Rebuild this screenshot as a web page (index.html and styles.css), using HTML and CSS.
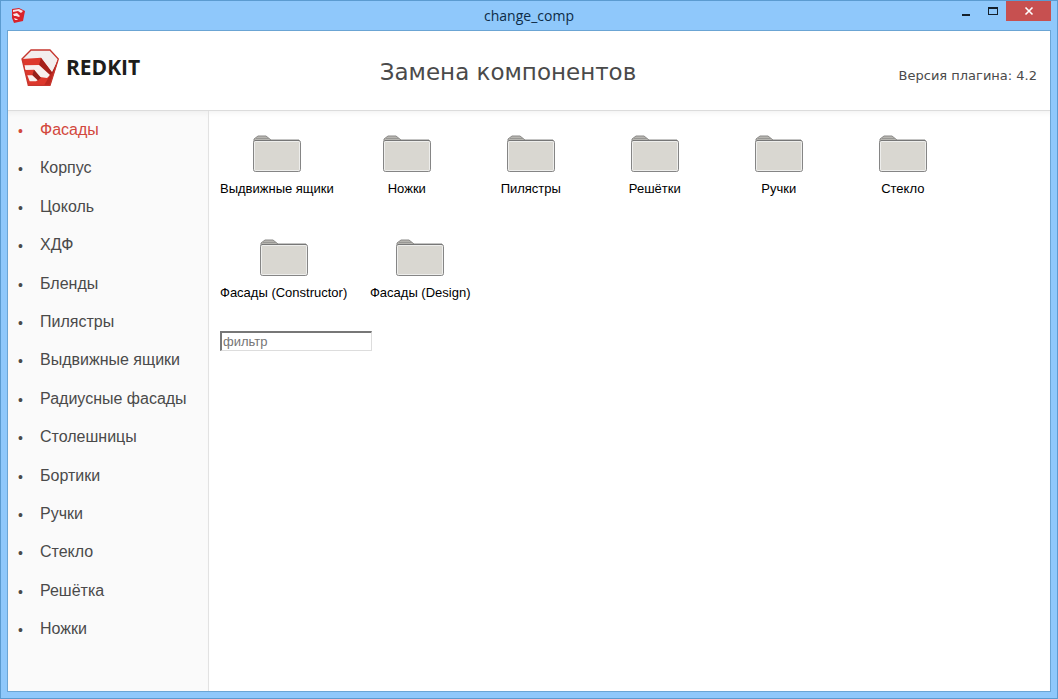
FILE: index.html
```html
<!DOCTYPE html>
<html lang="ru">
<head>
<meta charset="utf-8">
<title>change_comp</title>
<link rel="stylesheet" href="styles.css">
</head>
<body>
<svg class="defs" aria-hidden="true">
  <symbol id="logo" viewBox="10 9 114 114">
    <path d="M40 12H97L122 39L97 118H32L13 39Z" fill="#f3eeee"/>
    <path d="M13 39L70 35L104 80L122 39L97 118H32Z" fill="#dd382c"/>
    <path d="M70 35L103 79L122 40L114 68L101 91L64 57Z" fill="#a5201a"/>
    <path d="M20 58L64 57L97 87L88 96L66 93L49 71L23 72Z" fill="#f8f0ee"/>
    <path d="M49 71L70 95L60 104L44 88Z" fill="#96201a"/>
    <path d="M29 88H44L60 103L55 106H36Z" fill="#f8f0ee"/>
    <path d="M97 87L113 70L98 116L80 117Z" fill="#bd2920"/>
    <path d="M40 12H97L122 39L97 118H32L13 39Z" fill="none" stroke="#c6372f" stroke-width="4"/>
  </symbol>
  <symbol id="appicon" viewBox="0 0 14 15">
    <path d="M1 1L8 0L14 3L12 13L3 15L1 10Z" fill="#d9232a"/>
    <path d="M2 2L8 1L12 3L10 5L7 3L2 4ZM2 6L6 5L9 8L8 9L5 8L3 8ZM3 10L6 11L7 12L4 12Z" fill="#f8e4e8"/>
  </symbol>
  <symbol id="folder" viewBox="0 0 48 37">
    <path d="M1 10V4L5 1H13L18 5H46L47 10Z" fill="#b6b5b0" stroke="#8b8a88"/>
    <path d="M3 3.500H16" stroke="#989794"/>
    <rect x=".5" y="5.500" width="47" height="31" rx="2" fill="#d9d7d1" stroke="#858585"/>
    <rect x="1.500" y="6.500" width="45" height="29" rx="1" fill="none" stroke="#eeeeec"/>
    <path d="M2 5.500H46" stroke="#777"/>
  </symbol>
</svg>
<div class="window">
  <header class="titlebar">
    <svg class="app-icon"><use href="#appicon"/></svg>
    <span class="window-title">change_comp</span>
    <div class="window-buttons">
      <button class="win-button minimize" aria-label="Свернуть"><svg viewBox="0 0 10 10"><path d="M1 8H9V10H1Z" fill="#14202b"/></svg></button>
      <button class="win-button maximize" aria-label="Развернуть"><svg viewBox="0 0 10 10"><path d="M0 1H10V9H0ZM1 3V8H9V3Z" fill="#14202b" fill-rule="evenodd"/></svg></button>
      <button class="win-button close" aria-label="Закрыть"><svg viewBox="0 0 10 10"><path d="M1.500 1.500L8.500 8.500M8.500 1.500L1.500 8.500" stroke="#fff" stroke-width="1.600"/></svg></button>
    </div>
  </header>
  <div class="client">
    <div class="header">
      <div class="brand"><svg class="logo"><use href="#logo"/></svg><span>REDKIT</span></div>
      <h1>Замена компонентов</h1>
      <span class="version">Версия плагина: 4.2</span>
    </div>
    <div class="body">
      <nav class="sidebar">
        <ul>
          <li class="active"><a href="#">Фасады</a></li>
          <li><a href="#">Корпус</a></li>
          <li><a href="#">Цоколь</a></li>
          <li><a href="#">ХДФ</a></li>
          <li><a href="#">Бленды</a></li>
          <li><a href="#">Пилястры</a></li>
          <li><a href="#">Выдвижные ящики</a></li>
          <li><a href="#">Радиусные фасады</a></li>
          <li><a href="#">Столешницы</a></li>
          <li><a href="#">Бортики</a></li>
          <li><a href="#">Ручки</a></li>
          <li><a href="#">Стекло</a></li>
          <li><a href="#">Решётка</a></li>
          <li><a href="#">Ножки</a></li>
        </ul>
      </nav>
      <main class="content">
        <div class="folders">
          <a class="folder" href="#"><svg><use href="#folder"/></svg><span>Выдвижные ящики</span></a>
          <a class="folder" href="#"><svg><use href="#folder"/></svg><span>Ножки</span></a>
          <a class="folder" href="#"><svg><use href="#folder"/></svg><span>Пилястры</span></a>
          <a class="folder" href="#"><svg><use href="#folder"/></svg><span>Решётки</span></a>
          <a class="folder" href="#"><svg><use href="#folder"/></svg><span>Ручки</span></a>
          <a class="folder" href="#"><svg><use href="#folder"/></svg><span>Стекло</span></a>
          <a class="folder" href="#"><svg><use href="#folder"/></svg><span>Фасады (Constructor)</span></a>
          <a class="folder" href="#"><svg><use href="#folder"/></svg><span>Фасады (Design)</span></a>
        </div>
        <input class="filter" type="text" placeholder="фильтр" aria-label="фильтр">
      </main>
    </div>
  </div>
</div>
</body>
</html>
```

FILE: styles.css
```css
* { box-sizing: border-box; }
body {
  margin: 0;
  font-family: "Liberation Sans", Arial, sans-serif;
  color: #000;
}
a { color: inherit; text-decoration: none; }
.defs { position: absolute; width: 0; height: 0; }

.window {
  display: flex;
  flex-direction: column;
  min-height: 100vh;
  padding: 0 6px 6px;
  background: #8fc8fb;
  border: 1px solid #5b9bd0;
}
.titlebar {
  display: grid;
  grid-template-columns: 1fr auto 1fr;
  align-items: center;
  height: 29px;
}
.app-icon { width: 14px; height: 15px; margin-left: 4px; }
.window-title {
  font: 14px/20px "Open Sans", "Noto Sans", sans-serif;
  color: #0d2c47;
}
.window-buttons {
  display: flex;
  justify-content: flex-end;
  align-self: start;
}
.win-button {
  display: flex;
  align-items: center;
  justify-content: center;
  width: 27px;
  height: 20px;
  padding: 0;
  border: 0;
  background: none;
}
.win-button svg { width: 10px; height: 10px; }
.close { width: 45px; background: #c75050; }

.client {
  flex: 1;
  display: flex;
  flex-direction: column;
  background: #fff;
  border: 1px solid #6ba5d4;
}
.header {
  display: grid;
  grid-template-columns: 1fr auto 1fr;
  align-items: center;
  height: 80px;
  padding: 0 13px;
  border-bottom: 1px solid #dcdcdc;
  font-family: "DejaVu Sans", Verdana, sans-serif;
  color: #4a4a4a;
}
.brand {
  display: flex;
  align-items: center;
  gap: 7px;
  padding-bottom: 5px;
  font: bold 21px/30px "Open Sans", "Noto Sans", sans-serif;
  color: #1d1d1b;
}
.brand span { padding-bottom: 3px; }
.logo { width: 38px; height: 38px; }
h1 {
  margin: 0;
  padding: 2px 42px 0 0;
  font-size: 23px;
  line-height: 30px;
  font-weight: normal;
}
.version {
  justify-self: end;
  padding-top: 10px;
  font-size: 13px;
  line-height: 20px;
}

.body { flex: 1; display: flex; }
.sidebar {
  flex: none;
  width: 201px;
  background: #fafafa;
  border-right: 1px solid #e2e2e2;
  box-shadow: inset 0 5px 5px -3px #eee;
}
.sidebar ul {
  margin: 0;
  padding: 0 0 0 10px;
  list-style: none;
  font-size: 16px;
  line-height: 2.4;
  color: #4a4a4a;
}
.sidebar li { display: flex; }
.sidebar li::before { content: "•"; width: 22px; font-size: 14px; line-height: 40px; height: 38px; }
.sidebar .active { color: #d2483d; }

.content {
  flex: 1;
  padding: 24px 10px;
  box-shadow: inset 0 5px 5px -3px #f3f3f3;
}
.folders { display: flex; flex-wrap: wrap; gap: 40px 20px; max-width: 800px; }
.folder {
  display: flex;
  flex-direction: column;
  align-items: center;
  gap: 6px;
  min-width: 104px;
  padding: 0 1px;
  font-size: 13px;
  line-height: 21px;
}
.folder svg { width: 48px; height: 37px; }
.filter {
  display: block;
  width: 152px;
  height: 20px;
  margin: 28px 0 0 1px;
  padding: 0 1px;
  border: 1px solid #ddd;
  border-top: 2px solid #777;
  border-left: 2px solid #777;
  font: 13px "Liberation Sans", Arial, sans-serif;
}
.filter::placeholder { color: #757575; }
```
